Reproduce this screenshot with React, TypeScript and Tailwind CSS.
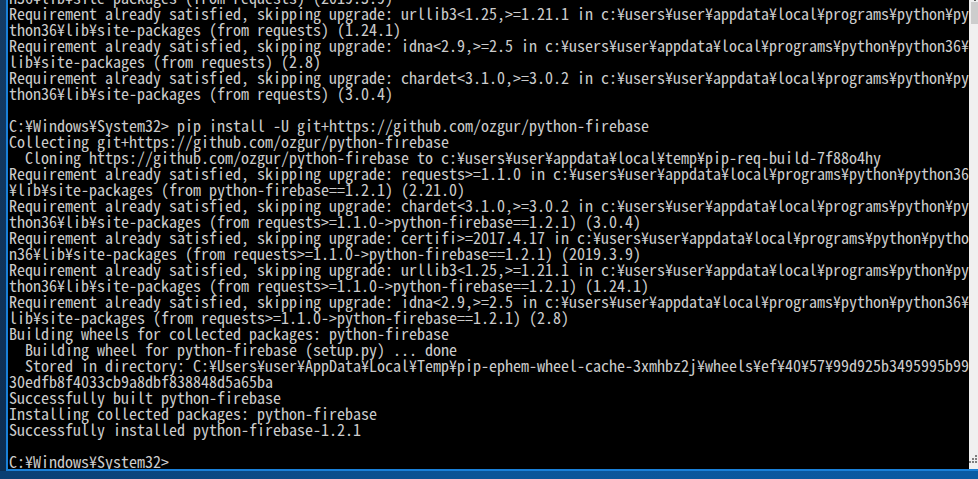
const lines: string[] = [
  "n36¥lib¥site-packages (from requests) (2019.3.9)",
  "Requirement already satisfied, skipping upgrade: urllib3<1.25,>=1.21.1 in c:¥users¥user¥appdata¥local¥programs¥python¥py",
  "thon36¥lib¥site-packages (from requests) (1.24.1)",
  "Requirement already satisfied, skipping upgrade: idna<2.9,>=2.5 in c:¥users¥user¥appdata¥local¥programs¥python¥python36¥",
  "lib¥site-packages (from requests) (2.8)",
  "Requirement already satisfied, skipping upgrade: chardet<3.1.0,>=3.0.2 in c:¥users¥user¥appdata¥local¥programs¥python¥py",
  "thon36¥lib¥site-packages (from requests) (3.0.4)",
  "",
  "C:¥Windows¥System32> pip install -U git+https://github.com/ozgur/python-firebase",
  "Collecting git+https://github.com/ozgur/python-firebase",
  "  Cloning https://github.com/ozgur/python-firebase to c:¥users¥user¥appdata¥local¥temp¥pip-req-build-7f88o4hy",
  "Requirement already satisfied, skipping upgrade: requests>=1.1.0 in c:¥users¥user¥appdata¥local¥programs¥python¥python36",
  "¥lib¥site-packages (from python-firebase==1.2.1) (2.21.0)",
  "Requirement already satisfied, skipping upgrade: chardet<3.1.0,>=3.0.2 in c:¥users¥user¥appdata¥local¥programs¥python¥py",
  "thon36¥lib¥site-packages (from requests>=1.1.0->python-firebase==1.2.1) (3.0.4)",
  "Requirement already satisfied, skipping upgrade: certifi>=2017.4.17 in c:¥users¥user¥appdata¥local¥programs¥python¥pytho",
  "n36¥lib¥site-packages (from requests>=1.1.0->python-firebase==1.2.1) (2019.3.9)",
  "Requirement already satisfied, skipping upgrade: urllib3<1.25,>=1.21.1 in c:¥users¥user¥appdata¥local¥programs¥python¥py",
  "thon36¥lib¥site-packages (from requests>=1.1.0->python-firebase==1.2.1) (1.24.1)",
  "Requirement already satisfied, skipping upgrade: idna<2.9,>=2.5 in c:¥users¥user¥appdata¥local¥programs¥python¥python36¥",
  "lib¥site-packages (from requests>=1.1.0->python-firebase==1.2.1) (2.8)",
  "Building wheels for collected packages: python-firebase",
  "  Building wheel for python-firebase (setup.py) ... done",
  "  Stored in directory: C:¥Users¥user¥AppData¥Local¥Temp¥pip-ephem-wheel-cache-3xmhbz2j¥wheels¥ef¥40¥57¥99d925b3495995b99",
  "30edfb8f4033cb9a8dbf838848d5a65ba",
  "Successfully built python-firebase",
  "Installing collected packages: python-firebase",
  "Successfully installed python-firebase-1.2.1",
  "",
  "C:¥Windows¥System32>",
];

export default function App() {
  return (
    <div className="w-[978px] h-[479px] overflow-hidden bg-[#0b5291] flex flex-col">
      {/* window area */}
      <div className="flex h-[471px] shrink-0">
        {/* desktop strip on the left */}
        <div className="w-[6px] bg-gradient-to-b from-[#143c66] to-[#0c2d52]" />
        <div className="flex-1 flex border-l-2 border-b-2 border-[#1a80d8]">
          {/* console */}
          <div className="flex-1 bg-black overflow-hidden pl-[1px]">
            <div
              className="mt-[-11px] text-[16px] leading-[16px] text-[#cccccc]"
              style={{ fontFamily: '"Noto Sans Mono CJK JP", "Liberation Mono", monospace' }}
            >
              {lines.map((line, i) => (
                <div key={i} className="h-[16px] whitespace-pre">
                  {line}
                </div>
              ))}
            </div>
          </div>
          {/* scrollbar */}
          <div className="w-[9px] bg-[#f0f0f0] flex flex-col">
            <div className="h-[2px] flex justify-end pr-[2px]">
              <div className="w-[2px] h-[1px] bg-[#606060]" />
            </div>
            <div className="ml-[2px] h-[22px] bg-[#cdcdcd]" />
            <div className="flex-1" />
            <svg width="9" height="12" viewBox="0 0 9 12" className="mb-[4px]">
              <rect x="6" y="2" width="2" height="2" fill="#808080" />
              <rect x="6" y="5" width="2" height="2" fill="#808080" />
              <rect x="3" y="5" width="2" height="2" fill="#808080" />
              <rect x="6" y="8" width="2" height="2" fill="#808080" />
              <rect x="3" y="8" width="2" height="2" fill="#808080" />
              <rect x="0" y="8" width="2" height="2" fill="#808080" />
            </svg>
          </div>
        </div>
      </div>
      {/* desktop below the window */}
      <div className="flex-1 bg-gradient-to-r from-[#0a3f73] via-[#0b5598] to-[#0a5aa3]" />
    </div>
  );
}
